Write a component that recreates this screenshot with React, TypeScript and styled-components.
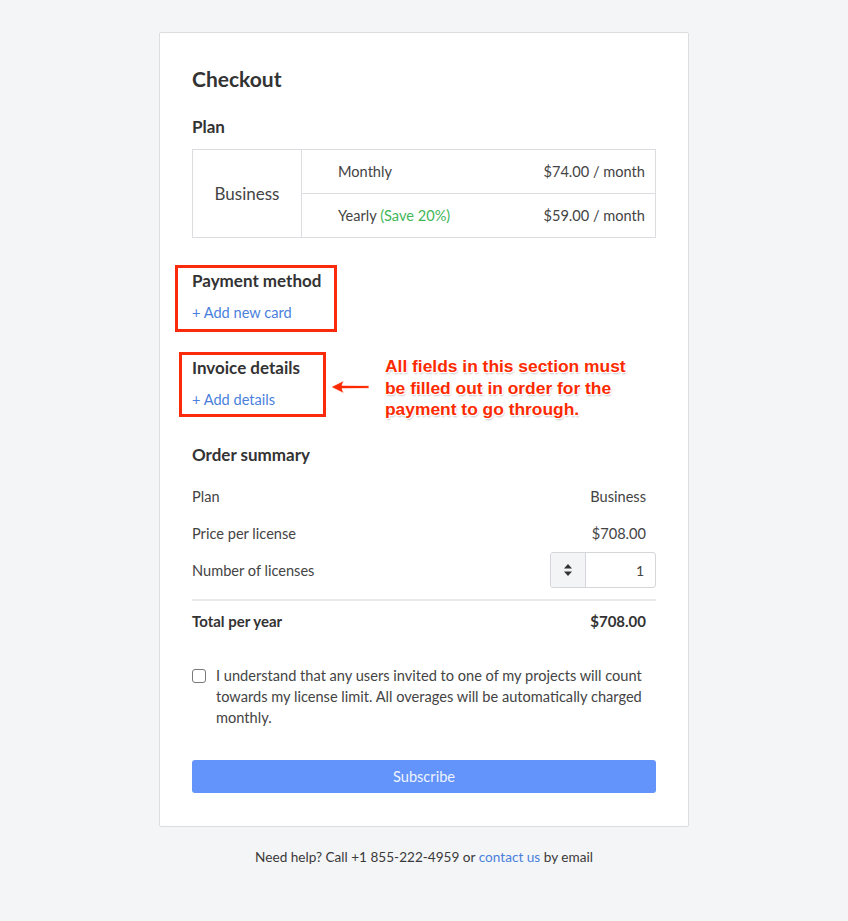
import React from "react";
import styled, { createGlobalStyle } from "styled-components";

const Global = createGlobalStyle`
  html, body { margin: 0; padding: 0; background: #f4f5f7; }
  body { font-family: Lato, "Open Sans", sans-serif; color: #3a3a3a; -webkit-font-smoothing: antialiased; }
  * { box-sizing: border-box; }
`;

const Page = styled.div`
  display: flex;
  flex-direction: column;
  align-items: center;
  padding-top: 32px;
  min-height: 921px;
`;

const Card = styled.div`
  width: 530px;
  background: #fff;
  border: 1px solid #dcdde0;
  border-radius: 2px;
  padding: 33px 32px 33px 32px;
  display: flex;
  flex-direction: column;
`;

const Title = styled.h1`
  margin: 0;
  font-size: 21px;
  line-height: 26px;
  font-weight: 700;
  color: #333;
`;

const Heading = styled.h2<{ $mt: number }>`
  margin: ${(p) => p.$mt}px 0 0 0;
  font-size: 17px;
  line-height: 20px;
  font-weight: 700;
  color: #333;
`;

const PlanTable = styled.div`
  margin-top: 12px;
  display: grid;
  grid-template-columns: 109px 1fr;
  border: 1px solid #dcdde0;
`;

const PlanName = styled.div`
  display: flex;
  align-items: center;
  justify-content: center;
  font-size: 17px;
  color: #444;
  border-right: 1px solid #dcdde0;
`;

const Options = styled.div`
  display: flex;
  flex-direction: column;
`;

const OptionRow = styled.div<{ $top?: boolean }>`
  height: ${(p) => (p.$top ? 43 : 44)}px;
  display: flex;
  align-items: center;
  justify-content: space-between;
  padding: 0 10px 0 36px;
  font-size: 14.6px;
  color: #444;
  border-top: ${(p) => (p.$top ? "none" : "1px solid #dcdde0")};
`;

const Save = styled.span`
  color: #3fb75a;
`;

const Section = styled.div<{ $mt: number }>`
  position: relative;
  margin-top: ${(p) => p.$mt}px;
`;

const Link = styled.a`
  display: block;
  margin-top: 12px;
  font-size: 14.6px;
  line-height: 20px;
  color: #4a7fdc;
  text-decoration: none;
`;

const InlineLink = styled.a`
  color: #4a7fdc;
  text-decoration: none;
`;

const RedBox = styled.div<{ $l: number; $t: number; $w: number; $h: number }>`
  position: absolute;
  left: ${(p) => p.$l}px;
  top: ${(p) => p.$t}px;
  width: ${(p) => p.$w}px;
  height: ${(p) => p.$h}px;
  border: 3px solid #fb2a0b;
  pointer-events: none;
`;

const Note = styled.div`
  position: absolute;
  left: 193px;
  top: -2px;
  width: 250px;
  font-family: "Liberation Sans", Arial, sans-serif;
  font-weight: 700;
  font-size: 17.4px;
  line-height: 21.5px;
  color: #fd2a00;
  text-shadow: 0 0 1px #fff, 1px 1px 0 #fff, -1px -1px 0 #fff, 1px -1px 0 #fff, -1px 1px 0 #fff, 1px 2px 2px rgba(0,0,0,0.25);
`;

const Arrow = styled.svg`
  position: absolute;
  left: 137px;
  top: 21px;
  overflow: visible;
`;

const Summary = styled.div`
  margin-top: 13px;
  display: flex;
  flex-direction: column;
  gap: 1px;
`;

const Row = styled.div`
  height: 36px;
  display: flex;
  align-items: center;
  justify-content: space-between;
  font-size: 14.6px;
  color: #444;
`;

const Value = styled.span`
  padding-right: 10px;
`;

const Divider = styled.div`
  margin-top: 11px;
  border-top: 2px solid #e8e9eb;
`;

const TotalRow = styled.div`
  margin-top: 8px;
  height: 24px;
  display: flex;
  align-items: center;
  justify-content: space-between;
  font-size: 15px;
  font-weight: 700;
  color: #333;
`;

const Stepper = styled.div`
  display: flex;
  width: 106px;
  height: 36px;
  border: 1px solid #d5d6d9;
  border-radius: 3px;
  overflow: hidden;
`;

const StepBtn = styled.div`
  width: 35px;
  background: #f3f4f6;
  border-right: 1px solid #d5d6d9;
  display: flex;
  align-items: center;
  justify-content: center;
`;

const StepValue = styled.div`
  flex: 1;
  display: flex;
  align-items: center;
  justify-content: flex-end;
  padding-right: 11px;
  font-size: 14px;
  color: #444;
`;

const Agree = styled.label`
  margin-top: 32px;
  display: flex;
  align-items: flex-start;
  gap: 10px;
  font-size: 14.6px;
  line-height: 21px;
  color: #444;
`;

const Box = styled.span`
  flex: none;
  margin-top: 4px;
  width: 14px;
  height: 14px;
  border: 1.5px solid #7a7a7a;
  border-radius: 3px;
  background: #fff;
`;

const Subscribe = styled.button`
  margin-top: 32px;
  height: 33px;
  width: 100%;
  border: none;
  border-radius: 3px;
  background: #6394fb;
  color: #eef3ff;
  font-family: Lato, sans-serif;
  font-size: 14.6px;
`;

const Footer = styled.div`
  margin-top: 20px;
  font-size: 13.6px;
  line-height: 20px;
  color: #3a3a3a;
`;

export default function App() {
  return (
    <>
      <Global />
      <Page>
        <Card>
          <Title>Checkout</Title>
          <Heading $mt={25}>Plan</Heading>
          <PlanTable>
            <PlanName>Business</PlanName>
            <Options>
              <OptionRow $top>
                <span>Monthly</span>
                <span>$74.00 / month</span>
              </OptionRow>
              <OptionRow>
                <span>
                  Yearly <Save>(Save 20%)</Save>
                </span>
                <span>$59.00 / month</span>
              </OptionRow>
            </Options>
          </PlanTable>

          <Section $mt={33}>
            <Heading $mt={0}>Payment method</Heading>
            <Link>+ Add new card</Link>
            <RedBox $l={-17} $t={-6} $w={162} $h={67} />
          </Section>

          <Section $mt={35}>
            <Heading $mt={0}>Invoice details</Heading>
            <Link>+ Add details</Link>
            <RedBox $l={-13} $t={-6} $w={147} $h={65} />
            <Arrow width="42" height="16" viewBox="0 0 42 16">
              <path d="M2 8 L15 1.5 L13 6.3 L40 6.6 L40 9.4 L13 9.7 L15 14.5 Z" fill="#fd2a00" stroke="#fff" strokeWidth="0.8" />
            </Arrow>
            <Note>
              All fields in this section must be filled out in order for the payment to go through.
            </Note>
          </Section>

          <Heading $mt={35}>Order summary</Heading>
          <Summary>
            <Row>
              <span>Plan</span>
              <Value>Business</Value>
            </Row>
            <Row>
              <span>Price per license</span>
              <Value>$708.00</Value>
            </Row>
            <Row>
              <span>Number of licenses</span>
              <Stepper>
                <StepBtn>
                  <svg width="10" height="14" viewBox="0 0 10 14">
                    <path d="M5 1 L9 5.5 L1 5.5 Z" fill="#333" />
                    <path d="M5 13 L9 8.5 L1 8.5 Z" fill="#333" />
                  </svg>
                </StepBtn>
                <StepValue>1</StepValue>
              </Stepper>
            </Row>
          </Summary>
          <Divider />
          <TotalRow>
            <span>Total per year</span>
            <Value>$708.00</Value>
          </TotalRow>

          <Agree>
            <Box />
            <span>
              I understand that any users invited to one of my projects will count towards my
              license limit. All overages will be automatically charged monthly.
            </span>
          </Agree>

          <Subscribe>Subscribe</Subscribe>
        </Card>
        <Footer>
          Need help? Call +1 855-222-4959 or <InlineLink>contact us</InlineLink> by email
        </Footer>
      </Page>
    </>
  );
}
